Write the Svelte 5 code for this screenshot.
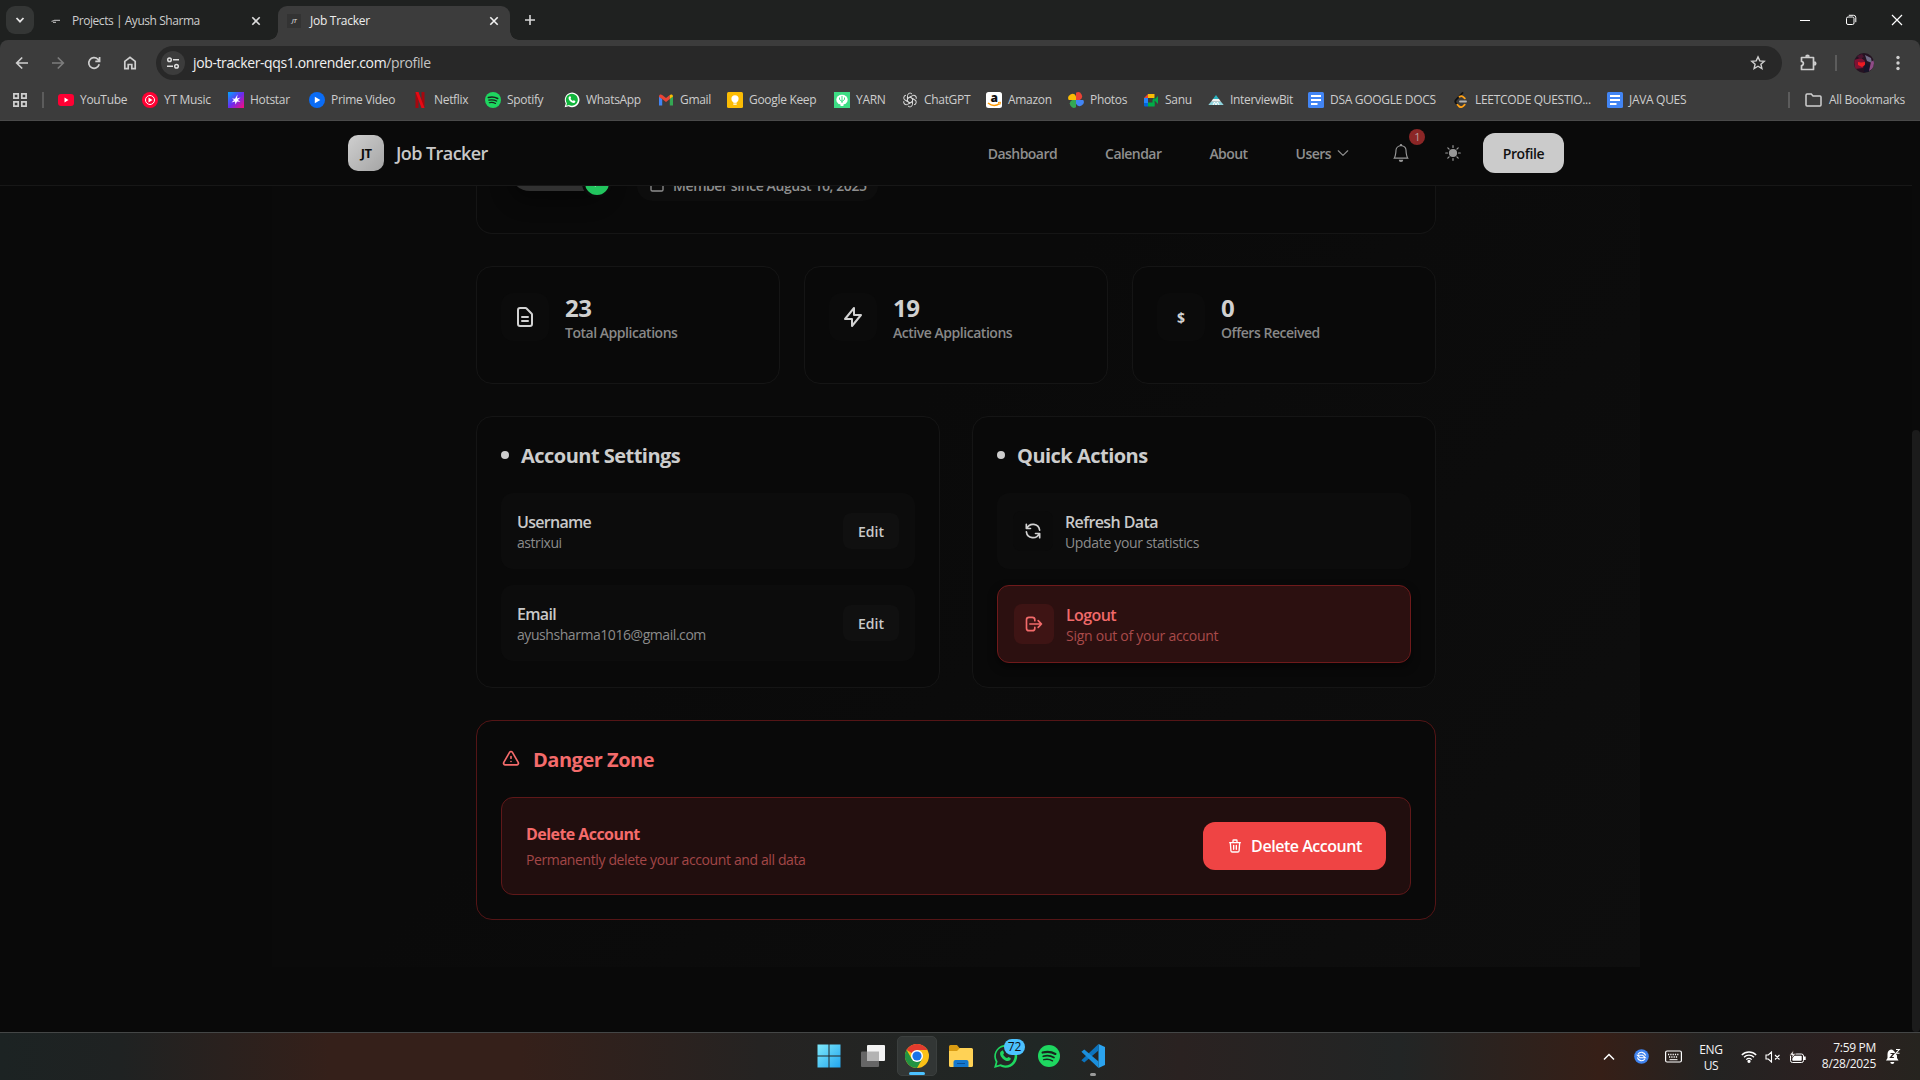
<script>
  const bookmarks = [
    { id: 'youtube', label: 'YouTube', w: 84 },
    { id: 'ytmusic', label: 'YT Music', w: 86 },
    { id: 'hotstar', label: 'Hotstar', w: 81 },
    { id: 'prime', label: 'Prime Video', w: 103 },
    { id: 'netflix', label: 'Netflix', w: 73 },
    { id: 'spotify', label: 'Spotify', w: 79 },
    { id: 'whatsapp', label: 'WhatsApp', w: 94 },
    { id: 'gmail', label: 'Gmail', w: 69 },
    { id: 'keep', label: 'Google Keep', w: 107 },
    { id: 'yarn', label: 'YARN', w: 68 },
    { id: 'chatgpt', label: 'ChatGPT', w: 84 },
    { id: 'amazon', label: 'Amazon', w: 82 },
    { id: 'photos', label: 'Photos', w: 75 },
    { id: 'meet', label: 'Sanu', w: 65 },
    { id: 'interviewbit', label: 'InterviewBit', w: 100 },
    { id: 'docs', label: 'DSA GOOGLE DOCS', w: 145 },
    { id: 'leetcode', label: 'LEETCODE QUESTIO...', w: 154 },
    { id: 'docs', label: 'JAVA QUES', w: 90 }
  ];

  const outline = {
    doc: 'M9 12h6m-6 4h6m2 5H7a2 2 0 01-2-2V5a2 2 0 012-2h5.586a1 1 0 01.707.293l5.414 5.414a1 1 0 01.293.707V19a2 2 0 01-2 2z',
    bolt: 'M13 10V3L4 14h7v7l9-11h-7z',
    refresh: 'M4 4v5h.582m15.356 2A8.001 8.001 0 004.582 9m0 0H9m11 11v-5h-.581m0 0a8.003 8.003 0 01-15.357-2m15.357 2H15',
    logout: 'M17 16l4-4m0 0l-4-4m4 4H7m6 4v1a3 3 0 01-3 3H6a3 3 0 01-3-3V7a3 3 0 013-3h4a3 3 0 013 3v1',
    warn: 'M12 9v2m0 4h.01m-6.938 4h13.856c1.54 0 2.502-1.667 1.732-3L13.732 4c-.77-1.333-2.694-1.333-3.464 0L3.34 16c-.77 1.333.192 3 1.732 3z',
    trash: 'M19 7l-.867 12.142A2 2 0 0116.138 21H7.862a2 2 0 01-1.995-1.858L5 7m5 4v6m4-6v6m1-10V4a1 1 0 00-1-1h-4a1 1 0 00-1 1v3M4 7h16',
    calendar: 'M8 7V3m8 4V3m-9 8h10M5 21h14a2 2 0 002-2V7a2 2 0 00-2-2H5a2 2 0 00-2 2v12a2 2 0 002 2z',
    check: 'M5 13l4 4L19 7'
  };

  const stats = [
    { icon: 'doc', value: '23', label: 'Total Applications' },
    { icon: 'bolt', value: '19', label: 'Active Applications' },
    { icon: null, value: '0', label: 'Offers Received' }
  ];

  const fields = [
    { name: 'Username', value: 'astrixui' },
    { name: 'Email', value: 'ayushsharma1016@gmail.com' }
  ];

  const petals = [0, 60, 120, 180, 240, 300];
</script>

{#snippet line(name, size)}
  <svg width={size} height={size} viewBox="0 0 24 24" fill="none" stroke="currentColor" stroke-width="2" stroke-linecap="round" stroke-linejoin="round"><path d={outline[name]} /></svg>
{/snippet}

{#snippet whatsapp(size, fill)}
  <svg width={size} height={size} viewBox="0 0 24 24">
    <path d="M1 23l1.6-5.8A11 11 0 1 1 6.8 21.4z" fill={fill ? '#fff' : '#1ed760'} />
    <path d="M3.4 20.6l1-3.8A9 9 0 1 1 7.4 19.5z" fill={fill ? '#12b53c' : '#242827'} />
    <path d="M8.5 6.5c.5-.4 1-.3 1.3.2l.8 1.9c.1.4-.7 1.1-.8 1.4.7 1.6 1.9 2.7 3.6 3.4.4 0 1-1.1 1.4-1l2 1c.5.4.1 1.6-.5 2.2-1.9 1.7-4.8.2-6.6-1.3-2-1.8-3.8-4.900-2.400-6.900z" fill={fill ? '#fff' : '#1ed760'} />
  </svg>
{/snippet}

{#snippet spotify(size)}
  <svg width={size} height={size} viewBox="0 0 24 24"><circle cx="12" cy="12" r="12" fill="#1ed760" /><g fill="none" stroke="#18251d" stroke-linecap="round"><path d="M5 8.3c4.800-1.400 9.800-.9 14 1.500" stroke-width="2.3" /><path d="M5.7 12.3c4-1.100 8.200-.7 11.700 1.300" stroke-width="1.9" /><path d="M6.300 16c3.300-.9 6.600-.5 9.500 1.200" stroke-width="1.6" /></g></svg>
{/snippet}

{#snippet favicon(id)}
  {#if id === 'youtube'}
    <svg class="fav" viewBox="0 0 16 16"><rect y="2" width="16" height="12" rx="3" fill="#ff0033" /><path d="M6.5 5.5v5l4-2.500z" fill="#fff" /></svg>
  {:else if id === 'ytmusic'}
    <svg class="fav" viewBox="0 0 16 16"><circle cx="8" cy="8" r="8" fill="#ff0033" /><circle cx="8" cy="8" r="4.5" fill="none" stroke="#fff" /><path d="M6.5 5.5v5l4-2.500z" fill="#fff" /></svg>
  {:else if id === 'hotstar'}
    <svg class="fav" viewBox="0 0 16 16"><defs><linearGradient id="hs" x1="0" y1="0" x2="1" y2="1"><stop offset="0" stop-color="#00a8ff" /><stop offset=".5" stop-color="#6a2cf0" /><stop offset="1" stop-color="#ff0a78" /></linearGradient></defs><rect width="16" height="16" fill="url(#hs)" /><path d="M9.500 2.500l-.5 4 3.500-1-2.700 2.500 2.700 1.700-3.500-.2-1.500 3-.5-3-3.500 1 2.500-2.500-2-1.500 3 .2z" fill="#fff" /></svg>
  {:else if id === 'prime'}
    <svg class="fav" viewBox="0 0 16 16"><circle cx="8" cy="8" r="8" fill="#0a6cf5" /><path d="M5.800 4.700v6.600L11.300 8z" fill="#fff" /></svg>
  {:else if id === 'netflix'}
    <svg class="fav" viewBox="0 0 16 16"><path d="M3.500 0h3v16h-3zM9.500 0h3v16h-3z" fill="#a5070f" /><path d="M3.500 0h3l6 16h-3z" fill="#e50914" /></svg>
  {:else if id === 'spotify'}
    {@render spotify(16)}
  {:else if id === 'whatsapp'}
    {@render whatsapp(16, true)}
  {:else if id === 'gmail'}
    <svg class="fav" viewBox="0 0 16 16"><path d="M1 4v9.500h3.200V7z" fill="#4285f4" /><path d="M15 4v9.500h-3.200V7z" fill="#34a853" /><path d="M1 4.500C1 2.300 3 2 4.200 3L8 6l3.800-3v4L8 10 4.200 7 1 5z" fill="#ea4335" /><path d="M11.800 3C13 2 15 2.300 15 4.500L11.800 7z" fill="#fbbc04" /></svg>
  {:else if id === 'keep'}
    <svg class="fav" viewBox="0 0 16 16"><rect width="16" height="16" rx="1.5" fill="#fbbc04" /><circle cx="8" cy="6.800" r="3.600" fill="#fff" /><path d="M6.300 9h3.400v1.800H6.300zM6.300 11.500h3.400v1.300H6.300z" fill="#fff" /></svg>
  {:else if id === 'yarn'}
    <svg class="fav" viewBox="0 0 16 16"><rect width="16" height="16" fill="#3ddc84" /><ellipse cx="8" cy="7.800" rx="5.700" ry="5" fill="#fff" /><path d="M6.500 12h3v2h-3z" fill="#fff" /><path d="M8 4v7M5.500 5.500v2L8 9.500M10.500 5.500v2L8 9.500" stroke="#3ddc84" fill="none" /></svg>
  {:else if id === 'chatgpt'}
    <svg class="fav" viewBox="0 0 16 16" fill="none" stroke="#d8d8d8" stroke-width="1">
      {#each petals as deg}<path d="M5.500 6.500V3.700a2.600 2.600 0 0 1 4.600-1.600M5.500 6.500L8 5.100l3.600 2" transform="rotate({deg} 8 8)" />{/each}
    </svg>
  {:else if id === 'amazon'}
    <svg class="fav" viewBox="0 0 16 16"><rect width="16" height="16" rx="2.500" fill="#fff" /><text x="8" y="10" text-anchor="middle" font-size="12" font-weight="800" font-family="Open Sans, sans-serif" fill="#111">a</text><path d="M2 11c3.500 2.800 8 3 11.500.6" stroke="#ff9900" stroke-width="1.600" fill="none" /><path d="M12 10.500l2.500-.3-.6 2.500" fill="none" stroke="#ff9900" /></svg>
  {:else if id === 'photos'}
    <svg class="fav" viewBox="0 0 16 16"><path d="M8 .7V8h3.800A3.700 3.700 0 0 0 8 .7z" fill="#ea4335" /><path d="M15.300 8H8v3.800A3.700 3.700 0 0 0 15.300 8z" fill="#4285f4" /><path d="M8 15.300V8H4.200A3.700 3.700 0 0 0 8 15.300z" fill="#34a853" /><path d="M.7 8H8V4.200A3.700 3.700 0 0 0 .7 8z" fill="#fbbc04" /></svg>
  {:else if id === 'meet'}
    <svg class="fav" viewBox="0 0 16 16"><path d="M1 6l4-4v4z" fill="#ea4335" /><path d="M5 2h6.500v4H5z" fill="#fbbc04" /><path d="M1 6h4v5H1z" fill="#2684fc" /><path d="M1 11h4v3.500H2A1 1 0 0 1 1 13.500z" fill="#0066da" /><path d="M5 10.500h6.500v4H5z" fill="#00ac47" /><path d="M11.500 5v9.500L9.500 11V8zM11 8l4-4v8z" fill="#00ac47" /></svg>
  {:else if id === 'interviewbit'}
    <svg class="fav" viewBox="0 0 16 16"><path d="M8 3l3 4H5z" fill="#2bb3c0" /><path d="M5 7h6l2 2.700H3z" fill="#f2f2f2" /><path d="M3 9.700h10l2.700 3.300H.3z" fill="#8ed3dc" /><path d="M5 13l1.500-3L8 13l1.500-3 1.500 3" stroke="#fff" fill="none" /></svg>
  {:else if id === 'docs'}
    <svg class="fav" viewBox="0 0 16 16"><rect width="16" height="16" rx="1.5" fill="#4285f4" /><path d="M3 4h10M3 8h10M3 12h6.500" stroke="#fff" stroke-width="1.800" /></svg>
  {:else if id === 'leetcode'}
    <svg class="fav" viewBox="0 0 16 16" fill="none" stroke-linecap="round" stroke-width="1.800"><path d="M9.500 1L3 7.800c-.9 1-.9 2.200-.1 3.200l1.500 1.600" stroke="#111" /><path d="M4.400 12.600l1.300 1.400c1.300 1.300 3.200 1.300 4.500.1l1.500-1.500M6.500 4.800c1.200-.9 2.600-.8 3.700.1l1.600 1.500" stroke="#ffa116" /><path d="M7 9.500h6" stroke="#b3b3b3" /></svg>
  {/if}
{/snippet}

<div class="screen">
  <header class="browser">
    <div class="tabs">
      <button class="tab-search" aria-label="Search tabs"><svg width="10" height="10" viewBox="0 0 10 10" fill="none" stroke="#e4e4e4" stroke-width="1.800"><path d="M1.500 3l3.500 3.700L8.500 3" /></svg></button>
      <div class="tab">
        <svg width="14" height="14" viewBox="0 0 14 14"><path d="M2.500 7.500l3-1.200h5.500M4 8.300h3" stroke="#aaa" stroke-width="1.200" fill="none" /></svg>
        <span class="tight">Projects | Ayush Sharma</span>
        <svg class="close" width="10" height="10" viewBox="0 0 10 10" stroke="#dcdcdc" stroke-width="1.600"><path d="M1.300 1.300l7.400 7.400M8.700 1.300L1.300 8.700" /></svg>
      </div>
      <div class="tab active">
        <i class="mini">JT</i>
        <span>Job Tracker</span>
        <svg class="close" width="10" height="10" viewBox="0 0 10 10" stroke="#f2f2f2" stroke-width="1.600"><path d="M1.300 1.300l7.400 7.400M8.700 1.300L1.300 8.700" /></svg>
      </div>
      <svg class="plus" width="12" height="12" viewBox="0 0 12 12" stroke="#d8d8d8" stroke-width="1.600"><path d="M6 1v10M1 6h10" /></svg>
      <div class="window">
        <svg width="12" height="12" viewBox="0 0 12 12" stroke="#fff"><path d="M1 6.500h10" /></svg>
        <svg width="12" height="12" viewBox="0 0 12 12" fill="none" stroke="#fff"><rect x="1.500" y="3" width="7.500" height="7.500" rx="1.500" /><path d="M3.800 1.300H8.500a2.300 2.300 0 0 1 2.300 2.300v4.600" /></svg>
        <svg width="12" height="12" viewBox="0 0 12 12" stroke="#fff" stroke-width="1.200"><path d="M1 1l10 10M11 1L1 11" /></svg>
      </div>
    </div>

    <div class="toolbar">
      <div class="nav-icons">
        <svg width="16" height="16" viewBox="0 0 16 16" fill="none" stroke="#cfcfcf" stroke-width="1.700"><path d="M14 8H3M8.200 2.500L2.700 8l5.500 5.500" /></svg>
        <svg width="16" height="16" viewBox="0 0 16 16" fill="none" stroke="#7c7c7c" stroke-width="1.700"><path d="M2 8h11M7.800 2.500L13.300 8l-5.500 5.500" /></svg>
        <svg width="16" height="16" viewBox="0 0 16 16" fill="none" stroke="#cfcfcf" stroke-width="1.700"><path d="M13.200 9.300A5.300 5.300 0 1 1 11.800 4.200L13.500 6M13.600 2v4.400H9.300" /></svg>
        <svg width="16" height="16" viewBox="0 0 16 16" fill="none" stroke="#cfcfcf" stroke-width="1.700"><path d="M2.800 6.300L8 2.300l5.200 4v7.400H9.800V9.500H6.200v4.200H2.800z" /></svg>
      </div>
      <div class="url">
        <span class="site"><svg width="14" height="14" viewBox="0 0 14 14" fill="none" stroke="#dedede" stroke-width="1.500"><circle cx="3.500" cy="3.700" r="1.800" /><path d="M7 3.700h6M1 10.300h6" /><circle cx="10.500" cy="10.300" r="1.800" /></svg></span>
        <span class="address">job-tracker-qqs1.onrender.com<em>/profile</em></span>
        <svg class="star" width="16" height="16" viewBox="0 0 16 16" fill="none" stroke="#cfcfcf" stroke-width="1.400"><path d="M8 1.900l1.800 4 4.400.4-3.300 2.900 1 4.300L8 11.200l-3.900 2.300 1-4.300L1.800 6.300l4.400-.4z" /></svg>
      </div>
      <div class="right-tools">
        <svg width="18" height="18" viewBox="0 0 18 18" fill="none" stroke="#cfcfcf" stroke-width="1.700"><path d="M2.500 3.500h12v12h-12v-4c2.500 0 2.500-4 0-4z" stroke-linejoin="round" /><path d="M7 2.800a1.500 1.500 0 0 1 3 0M15.200 8a1.500 1.500 0 0 1 0 3" fill="#cfcfcf" /></svg>
        <i class="sep"></i>
        <svg class="me" width="20" height="20" viewBox="0 0 20 20"><clipPath id="av"><circle cx="10" cy="10" r="10" /></clipPath><g clip-path="url(#av)"><rect width="20" height="20" fill="#251322" /><path d="M0 7l7-2 4 3-2 7-8 1z" fill="#7d1233" /><path d="M4 9l3 .5 4-.5v3l-3 2-4-2z" fill="#ef1b22" /><path d="M11 2l6 3 1 5-5-2z" fill="#6f6b86" /><path d="M17 9l3-2v8l-5 3z" fill="#8e4c86" /><path d="M11 11h4v8h-5z" fill="#171429" /><path d="M3 3l5-2 2 3-4 2z" fill="#4a1530" /></g></svg>
        <svg width="4" height="16" viewBox="0 0 4 16" fill="#cfcfcf"><circle cx="2" cy="2.500" r="1.700" /><circle cx="2" cy="8" r="1.700" /><circle cx="2" cy="13.500" r="1.700" /></svg>
      </div>
    </div>

    <div class="bookmarks">
      <svg width="14" height="14" viewBox="0 0 14 14" fill="none" stroke="#cfcfcf" stroke-width="1.700"><path d="M.9.900h4.300v4.300H.9zM8.800.9h4.300v4.300H8.800zM.9 8.800h4.300v4.300H.9zM8.800 8.800h4.300v4.300H8.800z" /></svg>
      <i class="sep first"></i>
      {#each bookmarks as b}
        <div class="bookmark" style:width="{b.w}px">{@render favicon(b.id)}<span>{b.label}</span></div>
      {/each}
      <div class="all">
        <i class="sep"></i>
        <svg width="17" height="14" viewBox="0 0 17 14" fill="none" stroke="#cfcfcf" stroke-width="1.500"><path d="M1 2.200C1 1.500 1.400 1 2 1h4.300l1.700 2h7c.6 0 1 .5 1 1.100V12c0 .6-.4 1-1 1H2c-.6 0-1-.4-1-1z" /></svg>
        <span>All Bookmarks</span>
      </div>
    </div>
  </header>

  <div class="viewport">
    <div class="page">
      <nav>
        <div class="nav-inner">
          <div class="logo">JT</div>
          <div class="brand">Job Tracker</div>
          <div class="links">
            <a href="#dashboard">Dashboard</a>
            <a href="#calendar">Calendar</a>
            <a href="#about">About</a>
            <a href="#users" class="users">Users <svg width="12" height="12" viewBox="0 0 16 16" fill="none" stroke="currentColor" stroke-width="1.500" stroke-linecap="round" stroke-linejoin="round"><path d="M1.700 5L8 11.300 14.300 5" /></svg></a>
          </div>
          <div class="bell">
            <svg width="18" height="18" viewBox="0 0 16 16" fill="currentColor"><path d="M8 16a2 2 0 0 0 2-2H6a2 2 0 0 0 2 2M8 1.918l-.797.161A4 4 0 0 0 4 6c0 .628-.134 2.197-.459 3.742-.16.767-.376 1.566-.663 2.258h10.244c-.287-.692-.502-1.490-.663-2.258C12.134 8.197 12 6.628 12 6a4 4 0 0 0-3.203-3.920zM14.220 12c.223.447.481.801.780 1H1c.299-.199.557-.553.780-1C2.680 10.200 3 6.880 3 6c0-2.420 1.720-4.440 4.005-4.901a1 1 0 1 1 1.990 0A5 5 0 0 1 13 6c0 .880.320 4.200 1.220 6" /></svg>
            <b>1</b>
          </div>
          <svg class="sun" width="16" height="16" viewBox="0 0 16 16" stroke="currentColor" stroke-width="1.200" stroke-linecap="round"><circle cx="8" cy="8" r="4.100" fill="currentColor" stroke="none" /><path d="M8 .7v1.800M8 13.500v1.800M.7 8h1.800M13.500 8h1.800M2.800 2.800l1.300 1.300M11.900 11.900l1.300 1.300M2.800 13.200l1.300-1.300M11.900 4.100l1.300-1.300" /></svg>
          <button class="profile">Profile</button>
        </div>
      </nav>

      <main>
        <section class="hero">
          <div class="avatar"><span class="verified">{@render line('check', 14)}</span></div>
          <div class="chip">{@render line('calendar', 16)}<span>Member since August 16, 2025</span></div>
        </section>

        <section class="stats">
          {#each stats as s}
            <article class="panel stat">
              <div class="stat-icon">
                {#if s.icon}{@render line(s.icon, 24)}{:else}$ {/if}
              </div>
              <div><strong>{s.value}</strong><p>{s.label}</p></div>
            </article>
          {/each}
        </section>

        <section class="columns">
          <article class="panel column">
            <h2><i></i>Account Settings</h2>
            {#each fields as f}
              <div class="row">
                <div><h3>{f.name}</h3><p>{f.value}</p></div>
                <button class="edit">Edit</button>
              </div>
            {/each}
          </article>
          <article class="panel column">
            <h2><i></i>Quick Actions</h2>
            <div class="row action">
              <span class="action-icon">{@render line('refresh', 20)}</span>
              <div><h3>Refresh Data</h3><p>Update your statistics</p></div>
            </div>
            <div class="row action logout">
              <span class="action-icon">{@render line('logout', 20)}</span>
              <div><h3>Logout</h3><p>Sign out of your account</p></div>
            </div>
          </article>
        </section>

        <section class="danger">
          <h2>{@render line('warn', 20)}Danger Zone</h2>
          <div class="delete-row">
            <div><h3>Delete Account</h3><p>Permanently delete your account and all data</p></div>
            <button class="delete">{@render line('trash', 16)}Delete Account</button>
          </div>
        </section>
      </main>
    </div>
    <div class="scrollbar"><i></i></div>
  </div>

  <footer class="taskbar">
    <div class="apps">
      <span class="app"><svg width="24" height="24" viewBox="0 0 24 24"><defs><linearGradient id="win" x1="0" y1="0" x2="1" y2="1"><stop offset="0" stop-color="#7fe9fb" /><stop offset="1" stop-color="#22a5ee" /></linearGradient></defs><path d="M.5.500h11v11H.5zM12.500.5h11v11h-11zM.5 12.500h11v11H.5zM12.500 12.500h11v11h-11z" fill="url(#win)" /></svg></span>
      <span class="app"><svg width="24" height="24" viewBox="0 0 24 24"><rect y="7.500" width="18" height="15.500" rx="1" fill="#666" /><rect x="6" y="1" width="18" height="16" rx="1" fill="#f3f3f3" /><path d="M6 7.500h12V17H6z" fill="#b3b3b3" /></svg></span>
      <span class="app current"><svg width="24" height="24" viewBox="0 0 24 24"><circle cx="12" cy="12" r="12" fill="#fbc116" /><path d="M12 12L1.600 6A12 12 0 0 1 22.400 6H12z" fill="#e33b2e" /><path d="M1.600 6A12 12 0 0 0 12 24l5.200-9L12 17.500 6.800 15z" fill="#229342" /><circle cx="12" cy="12" r="6" fill="#fff" /><circle cx="12" cy="12" r="4.600" fill="#1a73e8" /></svg></span>
      <span class="app"><svg width="24" height="24" viewBox="0 0 24 24"><path d="M0 2.500A1.500 1.500 0 0 1 1.500 1H8l2.500 3H22v6H0z" fill="#d99b12" /><path d="M0 7h8l3-3h11.500A1.500 1.500 0 0 1 24 5.500v16a1.500 1.500 0 0 1-1.500 1.500h-21A1.500 1.500 0 0 1 0 21.500z" fill="#ffd255" /><path d="M4.500 23v-5A2 2 0 0 1 6.500 16h11a2 2 0 0 1 2 2v5z" fill="#1478cf" /><path d="M8 19.500h8" stroke="#0b4f96" /></svg></span>
      <span class="app">{@render whatsapp(25, false)}<b>72</b></span>
      <span class="app">{@render spotify(22)}</span>
      <span class="app idle"><svg width="24" height="24" viewBox="0 0 24 24"><path d="M17.500 0L24 3v18l-6.500 3z" fill="#2ba3ee" /><path d="M17.500 0v6.500L3.300 18.500.4 16.200z" fill="#0c73bd" /><path d="M17.500 24v-6.500L3.300 5.500.4 7.800z" fill="#1b8fdc" /></svg></span>
    </div>
    <div class="tray">
      <svg class="t-up" width="12" height="12" viewBox="0 0 12 12" fill="none" stroke="#fff" stroke-width="1.500"><path d="M1 8.500l5-5 5 5" /></svg>
      <svg class="t-sync" width="15" height="15" viewBox="0 0 15 15"><circle cx="7.500" cy="7.500" r="7.300" fill="#3f82ee" /><g fill="none" stroke="#fff" stroke-width="1.100"><path d="M11.600 6.500A4.200 4.200 0 0 0 4 5.200M3.400 8.500A4.200 4.200 0 0 0 11 9.800M3.500 6.300h5.200l2.600 2.400H6z" /></g></svg>
      <svg class="t-key" width="17" height="13" viewBox="0 0 17 13" fill="none" stroke="#fff"><rect x=".6" y="1" width="15.800" height="11" rx="1.500" stroke-width="1.200" /><path d="M3 4.500h11M4 7h9" stroke-dasharray="1.200 1.100" stroke-width="1.300" /><path d="M4.500 9.700h8" /></svg>
      <div class="lang"><span>ENG</span><span>US</span></div>
      <svg class="t-wifi" width="16" height="13" viewBox="0 0 16 13" fill="none" stroke="#fff" stroke-width="1.300"><path d="M.8 5a10.200 10.200 0 0 1 14.400 0M3 7.300a7 7 0 0 1 10 0M5.300 9.600a3.800 3.800 0 0 1 5.400 0" /><circle cx="8" cy="11.300" r="1" fill="#fff" /></svg>
      <svg class="t-vol" width="16" height="12" viewBox="0 0 16 12" fill="none" stroke="#fff" stroke-width="1.100"><path d="M1 4h2.300L6.500 1v10L3.300 8H1zM10 4l4.500 4.500M14.500 4L10 8.500" /></svg>
      <svg class="t-bat" width="17" height="14" viewBox="0 0 17 14"><rect x="1.500" y="4" width="13" height="8.500" rx="2" fill="none" stroke="#fff" /><rect x="3.300" y="5.800" width="9.400" height="4.900" rx=".8" fill="#fff" /><path d="M15 6.500h1.700v3.500H15z" fill="#fff" /><path d="M4.500 0L.5 5.200h2.700L2.300 9l4.500-5.300H4z" fill="#fff" stroke="#30221e" stroke-width=".8" /></svg>
      <div class="clock"><span>7:59 PM</span><span>8/28/2025</span></div>
      <svg class="t-dnd" width="15" height="17" viewBox="0 0 15 17"><path d="M6 1.500A4.700 4.700 0 0 0 1.500 6v4L0 12.500h12.500L11 10V7.500L8 3z" fill="#fff" /><path d="M4.300 14h4a2 2 0 0 1-4 0z" fill="#fff" /><path d="M4.500 5.500h3.400l-3.400 4h3.400" stroke="#2b2422" stroke-width="1.200" fill="none" /><path d="M10 1.500h3.300L10 5.200h3.500" stroke="#fff" stroke-width="1.100" fill="none" /></svg>
    </div>
  </footer>
</div>

<style>
  :global(body) { margin: 0; background: #0a0a0a; overflow: hidden; }
  .screen {
    width: 1920px; height: 1080px; display: flex; flex-direction: column; overflow: hidden;
    font-family: "Segoe UI", "Open Sans", "Noto Sans", sans-serif; color: #c9c9c9;
  }
  * { box-sizing: border-box; }
  svg { display: block; flex: none; }
  h2, h3, p { margin: 0; }
  button { font: inherit; border: 0; padding: 0; letter-spacing: inherit; }

  /* Browser chrome */
  .browser { height: 121px; background: #1f2120; font-size: 12px; flex: none; }
  .tabs { height: 40px; display: flex; align-items: flex-end; padding-left: 6px; }
  .tab-search { width: 28px; height: 28px; border-radius: 9px; background: #343635; display: grid; place-items: center; margin-bottom: 6px; }
  .tab { width: 226px; height: 34px; margin-left: 14px; padding: 0 13px 5px 1px; display: flex; align-items: center; color: #cdcdcd; letter-spacing: -0.27px; }
  .tab span { margin-left: 9px; white-space: nowrap; }
  .tab .tight { letter-spacing: -0.45px; }
  .tab .close { margin-left: auto; }
  .tab.active { width: 232px; margin-left: 4px; padding: 0 11px 5px 9px; background: #3c3c3c; border-radius: 9px 9px 0 0; color: #ededed; position: relative; }
  .tab.active::before, .tab.active::after { content: ""; position: absolute; bottom: 0; width: 9px; height: 9px; }
  .tab.active::before { left: -9px; background: radial-gradient(circle at 0 0, #0000 8.5px, #3c3c3c 9px); }
  .tab.active::after { right: -9px; background: radial-gradient(circle at 100% 0, #0000 8.5px, #3c3c3c 9px); }
  .mini { width: 14px; height: 14px; background: #333; color: #bbb; font: italic 700 6px/14px "Open Sans", sans-serif; text-align: center; }
  .plus { margin: 0 0 14px 14px; }
  .window { margin: 0 17px 14px auto; display: flex; gap: 34px; }
  .toolbar { height: 46px; background: #3c3c3c; border-radius: 8px 8px 0 0; display: flex; align-items: center; padding: 0 20px 0 14px; }
  .nav-icons { display: flex; gap: 20px; width: 142px; }
  .url { width: 1626px; height: 34px; border-radius: 17px; background: #282828; display: flex; align-items: center; padding: 0 16px 0 5px; }
  .site { width: 24px; height: 24px; border-radius: 50%; background: #3c3c3c; display: grid; place-items: center; }
  .address { margin: -1px 0 0 8px; font-size: 14px; color: #f0f0f0; letter-spacing: -0.38px; }
  .address em { font-style: normal; color: #c4c4c4; }
  .star { margin-left: auto; }
  .right-tools { flex: 1; display: flex; align-items: center; justify-content: space-between; padding-left: 17px; }
  .me { margin-right: 4px; margin-left: -2px; }
  .sep { width: 2px; height: 16px; background: #5c5c5c; flex: none; }
  .bookmarks { height: 35px; background: #3c3c3c; border-bottom: 1px solid #4a4a4a; display: flex; align-items: center; padding: 0 15px 6px 13px; color: #cdcdcd; letter-spacing: -0.31px; }
  .bookmarks span { margin-top: -1px; }
  .sep.first { margin: 0 14px 0 15px; }
  .bookmark { display: flex; align-items: center; gap: 6px; white-space: nowrap; flex: none; }
  .fav { width: 16px; height: 16px; }
  .all { margin-left: auto; display: flex; align-items: center; }
  .all svg { margin: 0 7px 0 15px; }

  /* Web page */
  .viewport { height: 911px; flex: none; display: flex; background: #0a0a0a; }
  .page { width: 1912px; overflow: hidden; background: linear-gradient(135deg, #0a0a0a 0%, #0a0a0a 40%, #0e0e0e 100%) 272px 65px / 1368px 781px no-repeat #090909; }
  .scrollbar { width: 8px; background: #0a0a0a; padding-top: 309px; }
  .scrollbar i { display: block; height: 602px; background: #1b1b1b; border-radius: 4px; }
  nav { height: 65px; background: #0a0a0a; border-bottom: 1px solid #171717; display: flex; justify-content: center; position: relative; z-index: 2; }
  .nav-inner { width: 1216px; height: 64px; display: flex; align-items: center; font-size: 14px; font-weight: 600; color: #8f8f8f; letter-spacing: -0.55px; }
  .logo { width: 36px; height: 36px; border-radius: 10px; background: linear-gradient(135deg, #cfcfcf, #a5a5a5); color: #0c0c0c; font-weight: 700; font-size: 13px; display: grid; place-items: center; }
  .brand { margin-left: 12px; font-size: 18px; font-weight: 600; color: #c8c8c8; letter-spacing: -0.57px; }
  .links { display: flex; margin-left: auto; gap: 48px; }
  a { color: inherit; text-decoration: none; }
  .users { display: flex; align-items: center; gap: 6px; }
  .bell { margin-left: 43px; position: relative; color: #999; }
  .bell b { position: absolute; left: 17px; top: -15px; width: 16px; height: 16px; border-radius: 50%; background: #8b2626; color: #b9a0a0; font-size: 11px; font-weight: 500; line-height: 16px; text-align: center; }
  .sun { margin-left: 35px; color: #999; }
  .profile { margin-left: 22px; width: 81px; height: 40px; border-radius: 12px; background: #cbcbcb; color: #111; font-weight: 600; letter-spacing: -0.35px; }

  main { width: 960px; margin: 0 auto; }
  .hero { height: 48px; border: 1px solid #151515; border-top: 0; border-radius: 0 0 16px 16px; background: #090909; display: flex; align-items: flex-start; padding-left: 25px; }
  .avatar { width: 96px; height: 96px; margin: -91px 0 0 8px; border-radius: 20px; background: #313131; box-shadow: 0 10px 20px #0006; position: relative; }
  .verified { position: absolute; right: -6px; bottom: -7px; width: 30px; height: 30px; border-radius: 50%; border: 3px solid #0a0a0a; background: #22c55e; color: #fff; display: grid; place-items: center; }
  .verified :global(svg) { margin-top: -1px; }
  .chip { margin: -15px 0 0 31px; width: 241px; height: 30px; border-radius: 15px; background: #0d0d0d; display: flex; align-items: center; gap: 8px; padding: 0 0 2px 12px; font-size: 14px; font-weight: 600; color: #8f8f8f; letter-spacing: -0.42px; white-space: nowrap; }
  .panel { background: #090909; border: 1px solid #151515; border-radius: 16px; }
  .stats { margin-top: 32px; display: grid; grid-template-columns: repeat(3, 1fr); gap: 24px; }
  .stat { height: 118px; padding: 26px 24px; display: flex; gap: 16px; }
  .stat-icon { width: 48px; height: 48px; border-radius: 12px; background: #0b0b0b; color: #d2d2d2; display: grid; place-items: center; font-weight: 700; font-size: 14px; }
  .stat strong { display: block; font-size: 24px; line-height: 30px; font-weight: 700; color: #d0d0d0; letter-spacing: -0.5px; }
  .stat p { font-size: 14px; font-weight: 600; line-height: 20px; color: #888; letter-spacing: -0.47px; }
  .columns { margin-top: 32px; display: grid; grid-template-columns: 1fr 1fr; gap: 32px; }
  .column { height: 272px; padding: 25px 24px; }
  h2 { display: flex; align-items: center; font-size: 20px; line-height: 28px; font-weight: 700; color: #cdcdcd; letter-spacing: -0.52px; }
  h2 i { width: 8px; height: 8px; border-radius: 50%; background: #cdcdcd; margin: -3px 12px 0 0; }
  .row { height: 76px; border-radius: 12px; background: #0c0c0c; display: flex; align-items: center; justify-content: space-between; padding: 0 16px; margin-top: 16px; }
  h2 + .row { margin-top: 23px; }
  h3 { font-size: 16px; line-height: 22px; font-weight: 600; color: #c9c9c9; letter-spacing: -0.7px; }
  .action h3 { letter-spacing: -0.6px; }
  p { font-size: 14px; line-height: 20px; color: #8b8b8b; letter-spacing: -0.44px; }
  .action p { letter-spacing: -0.34px; }
  .logout p { letter-spacing: -0.26px; }
  .row > div { padding-top: 2px; }
  .edit { width: 56px; height: 36px; border-radius: 8px; background: #101010; color: #c9c9c9; font-size: 14px; font-weight: 600; }
  .action { justify-content: flex-start; gap: 12px; }
  .action-icon { width: 40px; height: 40px; border-radius: 8px; background: #0b0b0b; color: #d2d2d2; display: grid; place-items: center; }
  .logout { height: 78px; border: 1px solid #6f1a1b; background: #2c1010; box-shadow: 0 4px 8px #0008; }
  .logout .action-icon { background: #3e1414; color: #f26a6a; }
  .logout h3 { color: #f06a6a; }
  .logout p { color: #a94a4a; }
  .danger { margin-top: 32px; height: 200px; border: 1px solid #541516; border-radius: 16px; background: #090909; padding: 25px 24px; }
  .danger h2 { color: #f46b6b; letter-spacing: -0.48px; }
  .danger h2 :global(svg) { margin: -2px 12px 0 0; }
  .delete-row { margin-top: 23px; height: 98px; border: 1px solid #5f1819; border-radius: 12px; background: #210e0e; display: flex; align-items: center; justify-content: space-between; padding: 0 24px; }
  .delete-row h3 { color: #f46b6b; font-weight: 700; margin-bottom: 5px; letter-spacing: -0.56px; }
  .delete-row p { color: #a34748; letter-spacing: -0.38px; }
  .delete { width: 183px; height: 48px; border-radius: 12px; background: #ef4444; color: #fff; font-size: 16px; font-weight: 600; letter-spacing: -0.46px; display: flex; align-items: center; justify-content: center; gap: 8px; }

  /* Taskbar */
  .taskbar { height: 48px; flex: none; border-top: 1px solid #444646; display: flex; justify-content: space-between; color: #f4f4f4; font-size: 12px; padding-left: 809px; background: linear-gradient(90deg, #1c2323 0, #1f2222 120px, #35201a 330px, #35201a 520px, #252322 760px, #202725 1040px, #2a2221 1180px, #222525 1400px, #361f17 1600px, #232322 1710px, #2c2020 1840px, #26241f 1920px); }
  .apps { display: flex; gap: 4px; padding-top: 3px; }
  .app { width: 40px; height: 40px; border-radius: 5px; display: grid; place-items: center; position: relative; }
  .current { background: #323635; border: 1px solid #3b3f3e; }
  .current::after, .idle::after { content: ""; position: absolute; bottom: 0; width: 16px; height: 3px; border-radius: 2px; background: #4cc2ff; }
  .idle::after { width: 6px; background: #9a9a9a; }
  .app b { position: absolute; left: 19px; top: 3px; width: 21px; height: 16px; border-radius: 8px; background: #4cc2ff; color: #111; font-size: 12px; font-weight: 400; line-height: 16px; text-align: center; }
  .tray { display: flex; align-items: center; padding-right: 19px; }
  .t-sync { margin-left: 19px; }
  .t-key { margin-left: 16px; }
  .lang, .clock { display: flex; flex-direction: column; line-height: 16px; }
  .lang { align-items: center; width: 24px; margin: 2px 0 0 17px; letter-spacing: -0.3px; }
  .t-wifi { margin-left: 18px; }
  .t-vol { margin-left: 8px; }
  .t-bat { margin-left: 8px; }
  .clock { width: 70px; margin-top: -1px; align-items: flex-end; letter-spacing: -0.3px; }
  .t-dnd { margin-left: 10px; }
</style>
